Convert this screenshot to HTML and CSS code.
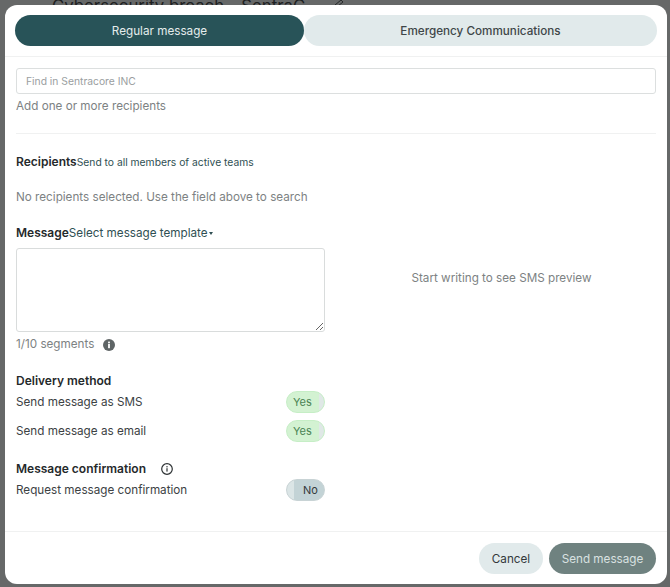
FILE: index.html
```html
<!DOCTYPE html>
<html lang="en">
<head>
<meta charset="utf-8">
<title>New message</title>
<link rel="stylesheet" href="styles.css">
</head>
<body>
<div class="backdrop-title">Cybersecurity breach - SentraC</div>
<svg class="backdrop-icon" viewBox="0 0 12 6" width="12" height="6"><path d="M2 5 L8 0 L10 2 L5 6" fill="none" stroke="#26292a" stroke-width="1"/></svg>
<main class="modal">
  <nav class="tabs">
    <button class="tab tab-active">Regular message</button>
    <button class="tab">Emergency Communications</button>
  </nav>
  <section class="body">
    <input class="search" type="text" placeholder="Find in Sentracore INC">
    <p class="muted hint">Add one or more recipients</p>
    <hr class="rule">
    <div class="heading-row recipients-row">
      <span class="heading">Recipients</span>
      <a class="link link-small">Send to all members of active teams</a>
    </div>
    <p class="muted empty">No recipients selected. Use the field above to search</p>
    <div class="heading-row message-row">
      <span class="heading">Message</span>
      <a class="link">Select message template<span class="caret"></span></a>
    </div>
    <div class="compose">
      <div class="compose-left">
        <textarea class="textarea"></textarea>
        <div class="segments">
          <span class="muted">1/10 segments</span>
          <svg class="icon" viewBox="0 0 12 12" width="12" height="12"><circle cx="6" cy="6" r="6" fill="#5f6566"/><rect x="5.1" y="5" width="1.8" height="4.2" fill="#fff"/><rect x="5.1" y="2.6" width="1.8" height="1.7" fill="#fff"/></svg>
        </div>
      </div>
      <div class="preview">Start writing to see SMS preview</div>
    </div>
    <div class="options">
      <h3 class="heading option-title">Delivery method</h3>
      <div class="option"><span>Send message as SMS</span><span class="toggle toggle-on">Yes</span></div>
      <div class="option option-second"><span>Send message as email</span><span class="toggle toggle-on">Yes</span></div>
      <h3 class="heading option-title confirm-title">Message confirmation
        <svg class="icon confirm-icon" viewBox="0 0 12 12" width="12" height="12"><circle cx="6" cy="6" r="5.3" fill="none" stroke="#2e3335" stroke-width="1.2"/><rect x="5.4" y="5.2" width="1.2" height="3.4" fill="#2e3335"/><rect x="5.4" y="3.1" width="1.2" height="1.3" fill="#2e3335"/></svg>
      </h3>
      <div class="option"><span>Request message confirmation</span><span class="toggle toggle-off">No</span></div>
    </div>
  </section>
  <footer class="footer">
    <button class="btn btn-cancel">Cancel</button>
    <button class="btn btn-send">Send message</button>
  </footer>
</main>
</body>
</html>
```
FILE: styles.css
```css
* { box-sizing: border-box; }
html, body { height: 100%; }
body {
  margin: 0;
  padding: 5px 3px 3px 5px;
  background: #666868;
  font-family: Inter, "Liberation Sans", sans-serif;
  font-size: 11.7px;
  color: #3c4244;
  overflow: hidden;
  position: relative;
}
.backdrop-title {
  position: absolute;
  left: 52px;
  top: -4px;
  font-size: 16.8px;
  color: #1e2122;
  white-space: nowrap;
}
.backdrop-icon { position: absolute; left: 333px; top: 0; }
.modal {
  position: relative;
  width: 662px;
  height: 579px;
  background: #fff;
  border-radius: 12px;
  display: flex;
  flex-direction: column;
}
.tabs {
  display: flex;
  padding: 10px;
  border-bottom: 1px solid #f0f1f1;
  height: 52px;
}
.tab {
  flex: 1 1 0;
  height: 31px;
  border: 0;
  border-radius: 16px;
  background: #e1eaeb;
  color: #3e4648;
  font: 500 11.7px Inter, "Liberation Sans", sans-serif;
}
.tab-active {
  flex: 0 0 289px;
  background: #285358;
  color: #e4ecec;
  font-weight: 400;
}
.body {
  flex: 1;
  padding: 11px 11px 0;
  display: flex;
  flex-direction: column;
}
.search {
  display: block;
  width: 100%;
  height: 26px;
  border: 1px solid #dcdfdf;
  border-radius: 3px;
  padding: 0 9px;
  font: 10.3px Inter, "Liberation Sans", sans-serif;
  outline: 0;
}
.search::placeholder { color: #9a9e9f; opacity: 1; }
.muted { color: #7d8283; }
.hint { margin: 5px 0 0; line-height: 15px; }
.rule { width: 100%; margin: 19px 0 0; border: 0; border-top: 1px solid #f0f1f1; }
.heading-row { display: flex; align-items: baseline; }
.recipients-row { margin-top: 20px; line-height: 15px; }
.heading { font-weight: 600; color: #25292b; font-size: 12px; }
.link { color: #2f4f53; }
.link-small { font-size: 10.3px; }
.empty { margin: 20px 0 0; line-height: 15px; }
.message-row { margin-top: 20px; line-height: 15px; }
.caret {
  display: inline-block;
  margin-left: 1px;
  vertical-align: 2px;
  border-top: 3px solid #2f4f53;
  border-left: 2.5px solid transparent;
  border-right: 2.5px solid transparent;
}
.compose { display: flex; margin-top: 7px; }
.compose-left { width: 309px; }
.textarea {
  display: block;
  width: 100%;
  height: 84px;
  border: 1px solid #d9dcdc;
  border-radius: 3px;
  outline: 0;
}
.segments { display: flex; align-items: center; gap: 9px; margin-top: 5px; line-height: 15px; }
.preview { flex: 1; text-align: center; margin-top: 23px; line-height: 15px; color: #7d8283; padding-left: 22px; }
.options { margin-top: 21px; width: 309px; }
.option-title { margin: 0; line-height: 15px; display: flex; align-items: center; }
.confirm-title { margin-top: 19px; }
.confirm-icon { margin-left: 15px; }
.option { display: flex; justify-content: space-between; align-items: center; height: 22px; margin-top: 3px; }
.option-second { margin-top: 7px; }
.toggle {
  width: 39px;
  height: 22px;
  border-radius: 11px;
  font-size: 11px;
  display: flex;
  align-items: center;
}
.toggle-on {
  background: linear-gradient(to right, #d3f2d2 32px, #dfe8e6 32px);
  border: 1px solid #c6eec6;
  color: #4b8455;
  padding-left: 6px;
}
.toggle-off {
  background: linear-gradient(to right, #dbe5e6 7px, #c3d3d6 7px);
  border: 1px solid #c8d3d5;
  color: #33393b;
  padding-left: 16px;
}
.footer {
  height: 53px;
  border-top: 1px solid #f0f1f1;
  display: flex;
  justify-content: flex-end;
  gap: 6px;
  padding: 11px 11px 0 0;
}
.btn {
  height: 31px;
  border: 0;
  border-radius: 16px;
  font: 11.7px Inter, "Liberation Sans", sans-serif;
}
.btn-cancel { width: 64px; background: #e1eaeb; color: #33393b; }
.btn-send { width: 107px; background: #6f8280; color: #d9e1e0; }
```
